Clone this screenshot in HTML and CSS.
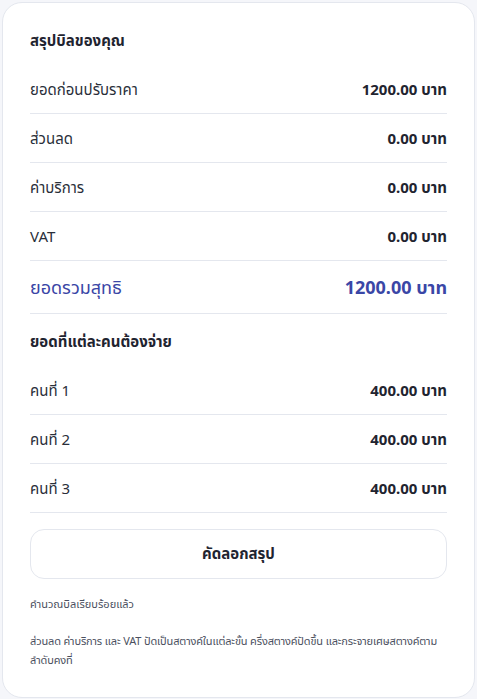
FILE: index.html
```html
<!DOCTYPE html>
<html lang="th">
<head>
  <meta charset="utf-8">
  <title>สรุปบิลของคุณ</title>
  <link rel="stylesheet" href="styles.css">
</head>
<body>
  <div class="bill-card">
    <h2 class="section-title">สรุปบิลของคุณ</h2>

    <div class="row">
      <span class="label">ยอดก่อนปรับราคา</span>
      <span class="value">1200.00 บาท</span>
    </div>
    <div class="row">
      <span class="label">ส่วนลด</span>
      <span class="value">0.00 บาท</span>
    </div>
    <div class="row">
      <span class="label">ค่าบริการ</span>
      <span class="value">0.00 บาท</span>
    </div>
    <div class="row">
      <span class="label">VAT</span>
      <span class="value">0.00 บาท</span>
    </div>
    <div class="row total">
      <span class="label">ยอดรวมสุทธิ</span>
      <span class="value">1200.00 บาท</span>
    </div>

    <h2 class="section-title">ยอดที่แต่ละคนต้องจ่าย</h2>

    <div class="row">
      <span class="label">คนที่ 1</span>
      <span class="value">400.00 บาท</span>
    </div>
    <div class="row">
      <span class="label">คนที่ 2</span>
      <span class="value">400.00 บาท</span>
    </div>
    <div class="row">
      <span class="label">คนที่ 3</span>
      <span class="value">400.00 บาท</span>
    </div>

    <button class="copy-btn">คัดลอกสรุป</button>

    <p class="status">คำนวณบิลเรียบร้อยแล้ว</p>
    <p class="note">ส่วนลด ค่าบริการ และ VAT ปัดเป็นสตางค์ในแต่ละขั้น ครึ่งสตางค์ปัดขึ้น และกระจายเศษสตางค์ตามลำดับคงที่</p>
  </div>
</body>
</html>
```

FILE: styles.css
```css
* {
  margin: 0;
  padding: 0;
  box-sizing: border-box;
}

body {
  font-family: 'Noto Sans', 'Noto Sans Thai', sans-serif;
  background: #f5f6fa;
  color: #1f2430;
  padding: 2px;
}

.bill-card {
  background: #fff;
  border: 1px solid #e4e7ee;
  border-radius: 20px;
  padding: 10px 27px 28px;
}

.section-title {
  font-size: 15px;
  font-weight: 700;
  line-height: 24px;
  padding: 15px 0 13px;
}

.row {
  display: flex;
  justify-content: space-between;
  align-items: center;
  padding: 12px 0;
  line-height: 24px;
  font-size: 15px;
  border-bottom: 1px solid #e4e7ee;
}

.row .label {
  color: #2a2f3a;
}

.row .value {
  font-weight: 700;
}

.row.total {
  padding: 13px 0;
  line-height: 26px;
  font-size: 18px;
}

.row.total .label,
.row.total .value {
  color: #3a46a6;
}

.copy-btn {
  display: block;
  width: 100%;
  height: 50px;
  margin-top: 16px;
  font-family: inherit;
  font-size: 15px;
  font-weight: 700;
  color: #1f2430;
  background: #fff;
  border: 1px solid #e4e7ee;
  border-radius: 14px;
  cursor: pointer;
}

.status {
  margin-top: 16px;
  font-size: 11px;
  line-height: 18px;
  color: #4b5060;
}

.note {
  margin-top: 18px;
  font-size: 11px;
  line-height: 19px;
  letter-spacing: -0.15px;
  color: #4b5060;
}
```
